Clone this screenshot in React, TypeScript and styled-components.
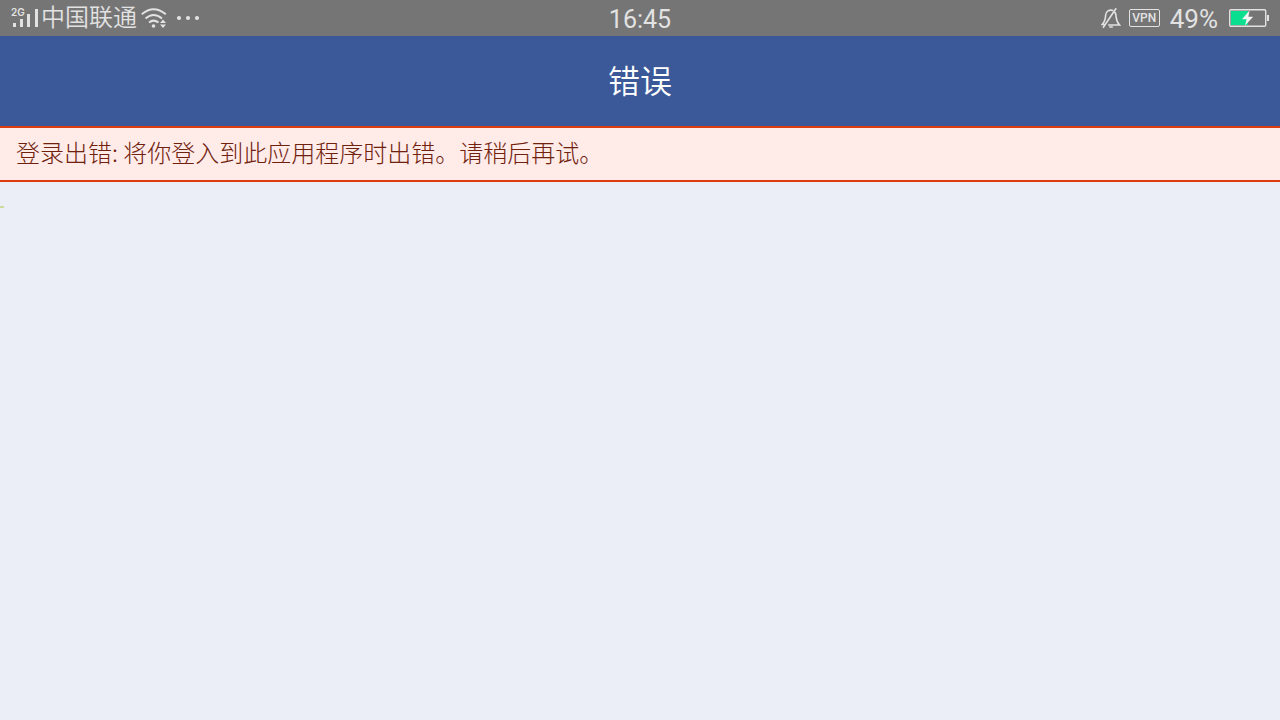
import React from 'react';
import styled, { createGlobalStyle } from 'styled-components';

const GlobalStyle = createGlobalStyle`
  * { box-sizing: border-box; }
  body {
    margin: 0;
    background: #ebeef7;
    font-family: "Noto Sans CJK SC", sans-serif;
  }
`;

const Page = styled.div`
  display: flex;
  flex-direction: column;
  min-height: 100vh;
`;

const StatusBar = styled.div`
  display: grid;
  grid-template-columns: 1fr auto 1fr;
  align-items: center;
  height: 36px;
  padding: 0 11px;
  background: #757575;
  color: #e2e2e2;
  font-size: 24px;
  line-height: 36px;
`;

const StatusGroup = styled.div<{ $end?: boolean }>`
  display: flex;
  align-items: center;
  justify-content: ${({ $end }) => ($end ? 'flex-end' : 'flex-start')};
`;

const Carrier = styled.span`
  height: 36px;
  margin: 0 4px 0 2px;
  font-weight: 350;
  line-height: 32px;
`;

const Clock = styled.time`
  padding-top: 4px;
  font-family: Roboto, sans-serif;
  font-size: 25px;
  font-weight: 400;
  line-height: 32px;
`;

const Dots = styled.svg`
  margin-left: 9px;
`;

const VpnBadge = styled.span`
  width: 31px;
  height: 18px;
  margin: 0 10px 0 8px;
  border: 1px solid #e2e2e2;
  border-radius: 2px;
  font-family: Roboto, sans-serif;
  font-size: 12px;
  font-weight: 500;
  line-height: 17px;
  text-align: center;
`;

const Percent = styled.span`
  padding-top: 2px;
  margin-right: 11px;
  font-family: Roboto, sans-serif;
  font-size: 26px;
  font-weight: 400;
  line-height: 34px;
`;

const TitleBar = styled.header`
  display: flex;
  justify-content: center;
  height: 90px;
  padding-top: 19px;
  background: #3b5998;
`;

const Title = styled.h1`
  margin: 0;
  color: #fff;
  font-size: 32px;
  font-weight: 350;
  line-height: 48px;
`;

const ErrorBanner = styled.p`
  margin: 0;
  padding: 6px 16px 10px;
  border: solid #dd3c10;
  border-width: 2px 0;
  background: #ffebe8;
  color: #6f210d;
  font-size: 24px;
  font-weight: 300;
  line-height: 36px;
`;

const Content = styled.main`
  padding-top: 24px;
`;

const Marker = styled.div`
  width: 4px;
  height: 2px;
  background: #cddc9a;
`;

const SignalIcon = () => (
  <svg width="28" height="22" viewBox="0 0 28 22" fill="#e2e2e2" aria-hidden="true">
    <text x="0" y="9" fontFamily="Inter, sans-serif" fontSize="10" fontWeight="600">2G</text>
    <rect x="2" y="16" width="3" height="4" />
    <rect x="9" y="12" width="3" height="8" />
    <rect x="16" y="7" width="3" height="13" />
    <rect x="24" y="2" width="3" height="18" />
  </svg>
);

const WifiIcon = () => (
  <svg width="26" height="22" viewBox="0 0 26 22" fill="none" stroke="#e2e2e2" strokeWidth="2" aria-hidden="true">
    <path d="M.8 7.2Q12.5-2.8 24.8 7.2M4.5 11.5Q12.5 4.5 21 11.5M8 15.5Q12.5 11.8 17.5 15.5" />
    <circle cx="12.5" cy="19" r="1.8" fill="#e2e2e2" stroke="none" />
    <path d="M19 16L22 12.6L25 16ZM19 17.6H25L22 21Z" fill="#e2e2e2" stroke="none" />
  </svg>
);

const BellOffIcon = () => (
  <svg width="20" height="22" viewBox="0 0 20 22" fill="none" stroke="#e2e2e2" strokeWidth="1.6" aria-hidden="true">
    <path d="M12.2 3.6C8.2 2 4.8 4.4 4.6 8.3C4.5 12.4 4 14.7 1.2 17.5H3.6M7.2 18H18.6C16 15.6 15.4 13.2 15.1 9.8C15 7.6 14.7 6.3 13.8 5M2 20.8L15.2 1.2M8.3 20H11.8" />
  </svg>
);

const BatteryIcon = () => (
  <svg width="40" height="20" viewBox="0 0 40 20" fill="none" role="img" aria-label="充电中">
    <rect x="0.7" y="1.7" width="36" height="16.6" rx="1.3" stroke="#e2e2e2" strokeWidth="1.4" />
    <rect x="2" y="3" width="17" height="14" fill="#0adf8f" />
    <rect x="38" y="7" width="2" height="6" fill="#e2e2e2" />
    <path d="M20.5 2.5L13 11.2H17.6L16 17.5L24.2 8.8H19.4Z" fill="#f4f4f4" />
  </svg>
);

export default function App() {
  return (
    <Page lang="zh-CN">
      <GlobalStyle />
      <StatusBar>
        <StatusGroup>
          <SignalIcon />
          <Carrier>中国联通</Carrier>
          <WifiIcon />
          <Dots width="24" height="6" viewBox="0 0 24 6" fill="#e2e2e2" aria-hidden="true">
            <circle cx="3" cy="3" r="2.1" />
            <circle cx="12" cy="3" r="2.1" />
            <circle cx="21" cy="3" r="2.1" />
          </Dots>
        </StatusGroup>
        <Clock>16:45</Clock>
        <StatusGroup $end>
          <BellOffIcon />
          <VpnBadge>VPN</VpnBadge>
          <Percent>49%</Percent>
          <BatteryIcon />
        </StatusGroup>
      </StatusBar>
      <TitleBar>
        <Title>错误</Title>
      </TitleBar>
      <ErrorBanner role="alert">登录出错: 将你登入到此应用程序时出错。请稍后再试。</ErrorBanner>
      <Content>
        <Marker />
      </Content>
    </Page>
  );
}
